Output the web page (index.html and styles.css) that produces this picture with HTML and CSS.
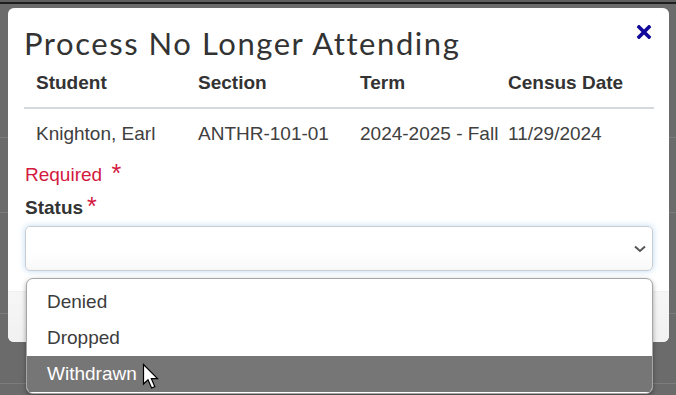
FILE: index.html
```html
<!DOCTYPE html>
<html lang="en">
<head>
<meta charset="utf-8">
<title>Process No Longer Attending</title>
<link rel="stylesheet" href="styles.css">
</head>
<body>
<div class="page">
  <div class="page-top"></div>
  <div class="page-row r1"></div>
  <div class="page-row r2"></div>
  <div class="page-row r3"></div>
  <div class="page-row r4"></div>
</div>

<div class="modal">
  <div class="modal-body">
    <h1 class="modal-title">Process No Longer Attending</h1>
    <table class="info">
      <thead>
        <tr><th class="c1">Student</th><th class="c2">Section</th><th class="c3">Term</th><th>Census Date</th></tr>
      </thead>
      <tbody>
        <tr><td>Knighton, Earl</td><td>ANTHR-101-01</td><td>2024-2025 - Fall</td><td>11/29/2024</td></tr>
      </tbody>
    </table>
    <div class="required">Required <span class="req-star">*</span></div>
    <div class="field-label">Status<span class="label-star">*</span></div>
    <div class="select">
      <svg class="chevron" width="12" height="8" viewBox="0 0 12 8"><path d="M1 1.5 L6 6 L11 1.5" fill="none" stroke="#555" stroke-width="2"/></svg>
    </div>
  </div>
  <div class="modal-footer"></div>
  <button class="close" aria-label="Close">
    <svg width="14" height="14" viewBox="0 0 14 14"><path d="M2 2 L12 12 M12 2 L2 12" stroke="#12089a" stroke-width="3.6" stroke-linecap="square"/></svg>
  </button>
</div>

<ul class="listbox">
  <li class="opt">Denied</li>
  <li class="opt">Dropped</li>
  <li class="opt active">Withdrawn</li>
</ul>

<svg class="cursor" width="20" height="28" viewBox="0 0 20 28">
  <path d="M1.5 1.5 L1.5 21 L6 16.8 L9.6 25 L12.8 23.6 L9.3 15.6 L15.5 15.6 Z" fill="#fff" stroke="#000" stroke-width="1.2" stroke-linejoin="miter"/>
</svg>
</body>
</html>
```

FILE: styles.css
```css
* { box-sizing: border-box; }
html, body { margin: 0; padding: 0; }
body {
  width: 676px;
  height: 395px;
  overflow: hidden;
  background: #6b6b6b;
  font-family: "Liberation Sans", Arial, sans-serif;
  position: relative;
}
.page { position: absolute; inset: 0; }
.page-top { height: 4px; background: #5f5f5f; border-bottom: 2px solid #1f1f1f; }
.page-row { position: absolute; left: 0; right: 0; height: 1px; background: #7c7c7c; }
.r1 { top: 137px; }
.r2 { top: 212px; }
.r3 { top: 313px; }
.r4 { top: 383px; }

.modal {
  position: absolute;
  left: 8px;
  top: 8px;
  width: 661px;
  height: 334px;
  background: #fff;
  border-radius: 6px;
  overflow: hidden;
  display: flex;
  flex-direction: column;
}
.modal-body { padding: 17px 15px 0 16px; flex: 0 0 auto; }
.modal-title {
  margin: 0;
  font-family: Lato, "Open Sans", sans-serif;
  font-weight: 400;
  font-size: 31px;
  line-height: 36px;
  color: #333;
  letter-spacing: 1.55px;
}
.info {
  margin-top: 12px;
  width: 630px;
  border-collapse: collapse;
  table-layout: fixed;
  font-size: 19px;
}
.info th, .info td {
  text-align: left;
  padding: 0 0 0 12px;
  line-height: 20px;
  white-space: nowrap;
  color: #333;
}
.info th { font-weight: 700; padding-bottom: 14px; border-bottom: 2px solid #d6d9dc; }
.info td { padding-top: 15px; color: #404040; }
.c1 { width: 162px; }
.c2 { width: 162px; }
.c3 { width: 148px; }

.required {
  margin-top: 18px;
  font-size: 19px;
  line-height: 20px;
  color: #d3193f;
  padding-left: 1px;
}
.req-star { font-size: 25px; margin-left: 4px; position: relative; top: 1px; }
.field-label {
  margin-top: 10px;
  font-size: 19px;
  line-height: 20px;
  font-weight: 700;
  color: #333;
  padding-left: 1px;
}
.label-star { color: #d3193f; font-weight: 400; font-size: 25px; margin-left: 4px; position: relative; top: 1px; }
.select {
  margin: 8px 1px 0 1px;
  height: 45px;
  border: 1px solid #c9cdd2;
  border-radius: 5px;
  background: linear-gradient(#fff 60%, #f8f8f8);
  box-shadow: 0 0 6px rgba(102, 175, 233, 0.45);
  display: flex;
  align-items: center;
  justify-content: flex-end;
  padding-right: 6px;
}
.chevron { display: block; }
.modal-footer {
  margin-top: 20px;
  flex: 1;
  background: linear-gradient(#f6f6f6, #f1f1f1);
  border-top: 1px solid #f0f0f0;
}
.close {
  position: absolute;
  right: 18px;
  top: 17px;
  border: 0;
  padding: 0;
  background: transparent;
  width: 14px;
  height: 14px;
}
.close svg { display: block; }

.listbox {
  position: absolute;
  left: 26px;
  top: 278px;
  width: 627px;
  height: 116px;
  margin: 0;
  padding: 5px 0 0 0;
  list-style: none;
  background: #fff;
  border: 1px solid #a6a6a6;
  border-radius: 7px;
  overflow: hidden;
  box-shadow: 0 2px 5px rgba(0, 0, 0, 0.35);
}
.opt {
  height: 36px;
  line-height: 36px;
  padding-left: 20px;
  font-size: 19px;
  color: #3c3c3c;
}
.opt.active { background: #767676; color: #fff; }
.cursor { position: absolute; left: 142px; top: 363px; }
```
